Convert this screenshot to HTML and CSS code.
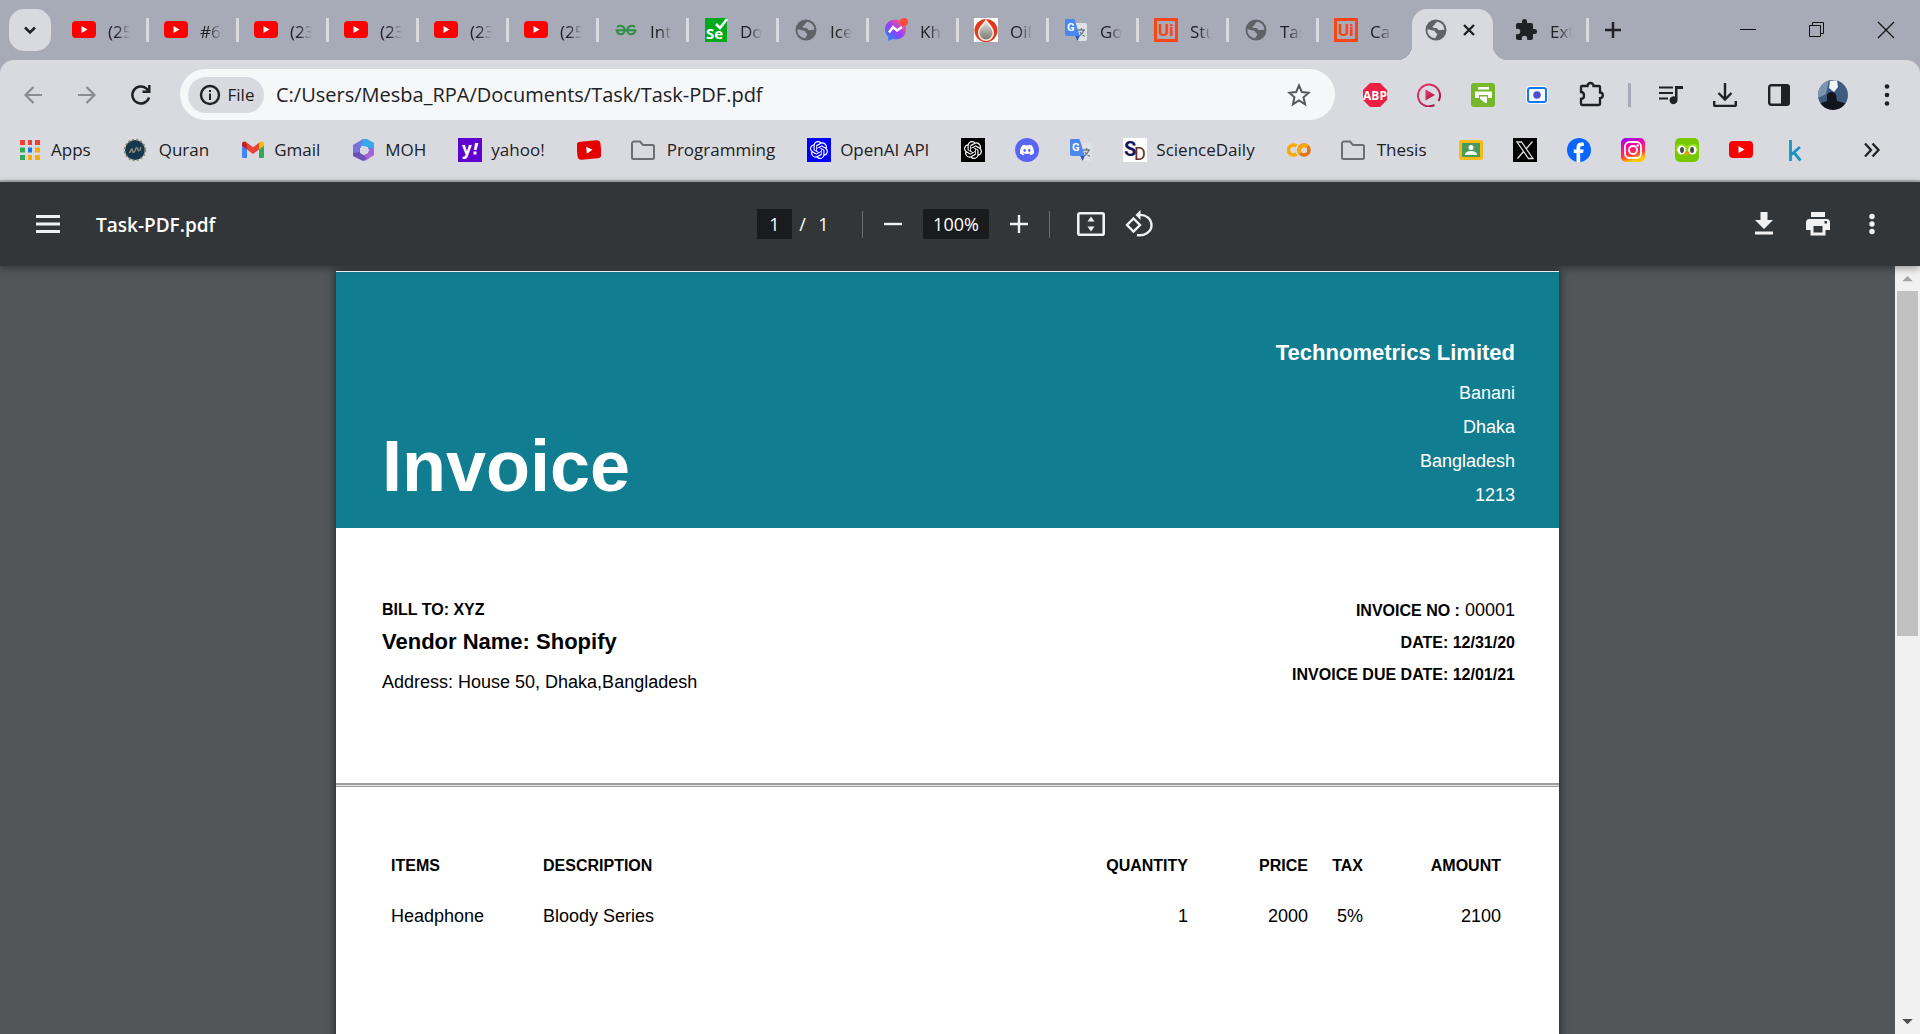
FILE: index.html
```
<!DOCTYPE html>
<html lang="en">
<head>
<meta charset="utf-8">
<title>Task-PDF.pdf</title>
<link rel="stylesheet" href="styles.css">
</head>
<body>
<svg class="sprite" aria-hidden="true">
  <defs>
    <linearGradient id="g-ms2" x1="0" y1="1" x2=".8" y2="0"><stop offset="0" stop-color="#0695ff"/><stop offset=".55" stop-color="#9a3cff"/><stop offset="1" stop-color="#ff6070"/></linearGradient>
    <linearGradient id="g-ig" x1="0" y1="0" x2=".3" y2="1"><stop offset="0" stop-color="#8a00ff"/><stop offset=".45" stop-color="#ff0a90"/><stop offset=".75" stop-color="#ff3a3a"/><stop offset="1" stop-color="#ffc800"/></linearGradient>
    <linearGradient id="g-drop" x1="0" y1="0" x2="0" y2="1"><stop offset="0" stop-color="#e8e8e4"/><stop offset="1" stop-color="#777770"/></linearGradient>
    <linearGradient id="g-play" x1="0" y1="0" x2="1" y2="1"><stop offset="0" stop-color="#f0356a"/><stop offset="1" stop-color="#9c1840"/></linearGradient>
  </defs>
</svg>
<svg class="symbols" aria-hidden="true">
  <symbol id="youtube" viewBox="0 0 24 24"><rect y="3" width="24" height="17" rx="4" fill="#f00"/><path d="M9.500 8v7l6-3.500z" fill="#fff"/></symbol>
  <symbol id="globe" viewBox="0 0 24 24"><circle cx="12" cy="12" r="10.500" fill="#5f6368"/><path d="M3.500 11.200 8 12.300c1.500.4 3 .2 3.300 1.700.2 1.200 1.800.9 1.800 2.400 0 1.600-1.600 1.600-1.800 3.900C7.200 20 3.500 16.600 3.500 12.800zM13.500 3.800c-1 .8-2.600 1.400-2.800 2.800-.2 1.200-2.200 1-2 2.400.2 1.100 1.800.9 3.300.9 1.800 0 1.400 1.900 3 2.200 1.700.3 3.500-.9 5.200.3.500-4-2.600-7.800-6.700-8.600z" fill="currentColor"/></symbol>
  <symbol id="translate" viewBox="0 0 24 24"><path d="M10 5h11a2 2 0 0 1 2 2v14a2 2 0 0 1-2 2h-7z" fill="#dfe1e5"/><path d="M14 12h7M17.500 10v2M20 12c-1 3-3 5-5 6M16 14c1 2 2.500 3.500 5 4.500" stroke="#6a7f8a" stroke-width="1.300" fill="none"/><path d="M11 17.500h5L13.500 23z" fill="#2f56b8"/><path d="M2 1h8.500l5.300 17H3a2 2 0 0 1-2-2V2a1 1 0 0 1 1-1z" fill="#4a88f0"/><text x="3" y="13" font-size="11" font-weight="700" fill="#fff" font-family="Roboto, sans-serif">G</text></symbol>
  <symbol id="uipath" viewBox="0 0 24 24"><rect x="1.500" y="1.500" width="21" height="21" fill="none" stroke="#fa4616" stroke-width="3"/><text x="4" y="18" font-size="17" font-weight="700" fill="#fa4616" font-family="Roboto, sans-serif">Ui</text></symbol>
  <symbol id="folder" viewBox="0 0 24 24"><path d="M3 3.500h6l3 3.500h9.500a1.500 1.500 0 0 1 1.500 1.500v11a1.500 1.500 0 0 1-1.500 1.500H2.500A1.500 1.500 0 0 1 1 19.500v-14a2 2 0 0 1 2-2z" fill="none" stroke="#6b6e73" stroke-width="2"/></symbol>
  <symbol id="knot" viewBox="0 0 24 24"><path fill="#fff" d="M22.2819 9.8211a5.9847 5.9847 0 0 0-.5157-4.9108 6.0462 6.0462 0 0 0-6.5098-2.9A6.0651 6.0651 0 0 0 4.9807 4.1818a5.9847 5.9847 0 0 0-3.9977 2.9 6.0462 6.0462 0 0 0 .7427 7.0966 5.98 5.98 0 0 0 .511 4.9107 6.051 6.051 0 0 0 6.5146 2.9001A5.9847 5.9847 0 0 0 13.2599 24a6.0557 6.0557 0 0 0 5.7718-4.2058 5.9894 5.9894 0 0 0 3.9977-2.9001 6.0557 6.0557 0 0 0-.7475-7.0729zm-9.022 12.6081a4.4755 4.4755 0 0 1-2.8764-1.0408l.1419-.0804 4.7783-2.7582a.7948.7948 0 0 0 .3927-.6813v-6.7369l2.02 1.1686a.071.071 0 0 1 .038.052v5.5826a4.504 4.504 0 0 1-4.4945 4.4944zm-9.6607-4.1254a4.4708 4.4708 0 0 1-.5346-3.0137l.142.0852 4.783 2.7582a.7712.7712 0 0 0 .7806 0l5.8428-3.3685v2.3324a.0804.0804 0 0 1-.0332.0615L9.74 19.9502a4.4992 4.4992 0 0 1-6.1408-1.6464zM2.3408 7.8956a4.485 4.485 0 0 1 2.3655-1.9728V11.6a.7664.7664 0 0 0 .3879.6765l5.8144 3.3543-2.0201 1.1685a.0757.0757 0 0 1-.071 0l-4.8303-2.7865A4.504 4.504 0 0 1 2.3408 7.872zm16.5963 3.8558L13.1038 8.364 15.1192 7.2a.0757.0757 0 0 1 .071 0l4.8303 2.7913a4.4944 4.4944 0 0 1-.6765 8.1042v-5.6772a.79.79 0 0 0-.407-.667zm2.0107-3.0231l-.142-.0852-4.7735-2.7818a.7759.7759 0 0 0-.7854 0L9.409 9.2297V6.8974a.0662.0662 0 0 1 .0284-.0615l4.8303-2.7866a4.4992 4.4992 0 0 1 6.6802 4.66zM8.3065 12.863l-2.02-1.1638a.0804.0804 0 0 1-.038-.0567V6.0742a4.4992 4.4992 0 0 1 7.3757-3.4537l-.142.0805L8.704 5.459a.7948.7948 0 0 0-.3927.6813zm1.0976-2.3654l2.602-1.4998 2.6069 1.4998v2.9994l-2.5974 1.4997-2.6067-1.4997Z"/></symbol>
</svg>

<header class="browser">
  <div class="tabstrip">
    <button class="tab-search" aria-label="Search tabs"><svg class="icon" viewBox="0 0 24 24"><path d="m7 9.500 5 5 5-5" fill="none" stroke="#202124" stroke-width="2.500"/></svg></button>
    <div class="tabs" role="tablist">
      <button class="tab tab-first" role="tab"><svg class="icon"><use href="#youtube"/></svg><span class="tab-title">(25)</span></button>
      <button class="tab" role="tab"><svg class="icon"><use href="#youtube"/></svg><span class="tab-title">#6</span></button>
      <button class="tab" role="tab"><svg class="icon"><use href="#youtube"/></svg><span class="tab-title">(23)</span></button>
      <button class="tab" role="tab"><svg class="icon"><use href="#youtube"/></svg><span class="tab-title">(23)</span></button>
      <button class="tab" role="tab"><svg class="icon"><use href="#youtube"/></svg><span class="tab-title">(23)</span></button>
      <button class="tab" role="tab"><svg class="icon"><use href="#youtube"/></svg><span class="tab-title">(25)</span></button>
      <button class="tab" role="tab"><svg class="icon" viewBox="0 0 24 24"><g fill="none" stroke="#2f8d46" stroke-width="2"><path d="M3 9c4-2.500 7.500-.5 7.500 3a3.800 3.800 0 0 1-7.600 1"/><path d="M21 9c-4-2.500-7.500-.5-7.500 3a3.800 3.800 0 0 0 7.600 1"/><path d="M1.500 12.300h21"/></g></svg><span class="tab-title">Int</span></button>
      <button class="tab" role="tab"><svg class="icon" viewBox="0 0 24 24"><path d="M1 0h22v24H1z" fill="#00a81c"/><path d="m12 6 4 4 7-9" fill="none" stroke="#fff" stroke-width="2.500"/><text x="2" y="21" font-size="15" font-weight="700" fill="#fff" font-family="Open Sans, sans-serif">Se</text></svg><span class="tab-title">Do</span></button>
      <button class="tab" role="tab"><svg class="icon"><use href="#globe"/></svg><span class="tab-title">Ice</span></button>
      <button class="tab" role="tab"><svg class="icon" viewBox="0 0 24 24"><path d="M11.500 1.500C5.500 1.500 1 5.800 1 11.500c0 3 1.300 5.500 3.300 7.200V23l4-2c1 .3 2 .4 3.200.4 6 0 10.500-4.300 10.500-10S17.500 1.500 11.500 1.500z" fill="url(#g-ms2)"/><path d="m5 14.500 4-5.500 4 3.500L18 9" fill="none" stroke="#fff" stroke-width="2.500"/><circle cx="20" cy="4" r="4" fill="#ff4b3a"/></svg><span class="tab-title">Kh</span></button>
      <button class="tab" role="tab"><svg class="icon" viewBox="0 0 24 24"><path d="M0 0h24v24H0z" fill="#fff"/><circle cx="12" cy="12.500" r="11.500" fill="#df3a1c"/><path d="M12 0c1 5 8 8 8 15a8 8 0 0 1-16 0C4 8 11 5 12 0z" fill="#f6ece6"/><path d="M12 3c1 4 6.500 7 6.500 12a6.500 6.500 0 0 1-13 0C5.500 10 11 7 12 3z" fill="url(#g-drop)"/></svg><span class="tab-title">Oil</span></button>
      <button class="tab" role="tab"><svg class="icon"><use href="#translate"/></svg><span class="tab-title">Go</span></button>
      <button class="tab" role="tab"><svg class="icon"><use href="#uipath"/></svg><span class="tab-title">Stu</span></button>
      <button class="tab" role="tab"><svg class="icon"><use href="#globe"/></svg><span class="tab-title">Tas</span></button>
      <button class="tab tab-before" role="tab"><svg class="icon"><use href="#uipath"/></svg><span class="tab-title">Ca</span></button>
      <div class="tab tab-active" role="tab" aria-selected="true"><svg class="icon"><use href="#globe"/></svg><button class="tab-close" aria-label="Close tab"><svg class="icon-small" viewBox="0 0 18 18"><path d="m4 4 10 10m0-10L4 14" stroke="#202124" stroke-width="2.400"/></svg></button></div>
      <button class="tab" role="tab"><svg class="icon" viewBox="0 0 24 24"><path fill="#202124" d="M20.500 11H19V7c0-1.100-.9-2-2-2h-4V3.500a2.500 2.500 0 0 0-5 0V5H4c-1.100 0-2 .9-2 2v3.800h1.500a2.700 2.700 0 0 1 0 5.400H2V20c0 1.100.9 2 2 2h3.800v-1.500a2.700 2.700 0 0 1 5.400 0V22H17c1.100 0 2-.9 2-2v-4h1.500a2.500 2.500 0 0 0 0-5z"/></svg><span class="tab-title">Ext</span></button>
    </div>
    <button class="new-tab" aria-label="New tab"><svg class="icon" viewBox="0 0 24 24"><path d="M12 4v16M4 12h16" stroke="#202124" stroke-width="2.500"/></svg></button>
    <div class="window-buttons">
      <button aria-label="Minimize"><svg class="icon" viewBox="0 0 24 24"><path d="M4 11.500h16" stroke="#111" /></svg></button>
      <button aria-label="Restore"><svg class="icon" viewBox="0 0 24 24"><path d="M4.500 7.500h11v11h-11zM7.500 7V4.500h11v11H16" fill="none" stroke="#111"/></svg></button>
      <button aria-label="Close"><svg class="icon" viewBox="0 0 24 24"><path d="m4 4 16 16m0-16L4 20" stroke="#111" stroke-width="1.200"/></svg></button>
    </div>
  </div>

  <div class="toolbar">
    <nav class="history">
      <button aria-label="Back"><svg class="icon" viewBox="0 0 24 24"><path d="M21 12H5m7.500-8L4.500 12l8 8" fill="none" stroke="#8a8b90" stroke-width="2.200"/></svg></button>
      <button aria-label="Forward"><svg class="icon" viewBox="0 0 24 24"><path d="M3 12h16m-7.500-8 8 8-8 8" fill="none" stroke="#8a8b90" stroke-width="2.200"/></svg></button>
      <button aria-label="Reload"><svg class="icon" viewBox="0 0 24 24"><path d="M20 14.500A8.500 8.500 0 1 1 17.500 5.600L20 8.500" fill="none" stroke="#202124" stroke-width="2.500"/><path d="M21.500 2v8h-8V7.600h5.600V2z" fill="#202124"/></svg></button>
    </nav>
    <div class="omnibox">
      <button class="site-chip"><svg class="icon" viewBox="0 0 24 24"><circle cx="12" cy="12" r="9" fill="none" stroke="#202124" stroke-width="2.400"/><path d="M12 10.500V17M12 7v2" stroke="#202124" stroke-width="2"/></svg>File</button>
      <input class="url" type="text" aria-label="Address" value="C:/Users/Mesba_RPA/Documents/Task/Task-PDF.pdf">
      <button class="star" aria-label="Bookmark"><svg class="icon" viewBox="0 0 24 24"><path d="m12 2.500 2.800 6.500 7 .7-5.300 4.600 1.600 7L12 17.500l-6.100 3.800 1.600-7L2.200 9.700l7-.7z" fill="none" stroke="#55585d" stroke-width="2"/></svg></button>
    </div>
    <div class="extensions">
      <button aria-label="Adblock Plus"><svg class="icon" viewBox="0 0 24 24"><path d="M7 0h10l7 7v10l-7 7H7l-7-7V7z" fill="#ee1f44"/><text x="12" y="16.500" font-size="12" font-weight="700" fill="#fff" text-anchor="middle" font-family="Open Sans, sans-serif">ABP</text></svg></button>
      <button aria-label="Player"><svg class="icon" viewBox="0 0 24 24"><path d="M17.500 22a11 11 0 1 1 4-4M17.500 22c-2 1-4 1.200-5.500 1" fill="none" stroke="url(#g-play)" stroke-width="2"/><path d="M8.500 6.500v11L18 12z" fill="url(#g-play)"/></svg></button>
      <button aria-label="Print friendly"><svg class="icon" viewBox="0 0 24 24"><rect width="24" height="24" rx="3" fill="#76b82a"/><path d="M7 4h11v2.500H7zM4 8.500h17V15h-4v-3H8v3H4z" fill="#fff"/><path d="M8.500 13h8v8l-3-1-5-4z" fill="#fff" stroke="#76b82a"/></svg></button>
      <button aria-label="Screen capture"><svg class="icon" viewBox="0 0 24 24"><rect x="1" y="3" width="22" height="18" rx="4" fill="#fff"/><rect x="3" y="5" width="18" height="14" rx="2" fill="#fff" stroke="#1277ff" stroke-width="2"/><circle cx="12" cy="12" r="3.800" fill="#4a4ed8"/></svg></button>
      <button aria-label="Extensions"><svg class="icon-large" viewBox="0 0 28 28"><path d="M5 5h5.500a3 3 0 0 1 6 0H22a1 1 0 0 1 1 1v5.500a2.800 2.800 0 0 1 0 5.600V23a1 1 0 0 1-1 1H5a1 1 0 0 1-1-1v-5c4 0 4-7 0-7V6a1 1 0 0 1 1-1z" fill="none" stroke="#202124" stroke-width="2.300"/></svg></button>
      <span class="divider"></span>
      <button aria-label="Media"><svg class="icon" viewBox="0 0 24 24"><path d="M0 4.500h14M0 10h14M0 15.500h9" stroke="#202124" stroke-width="2.200"/><path d="M16 3h8v3h-5.500v11a4 4 0 1 1-2.500-3.500z" fill="#202124"/></svg></button>
      <button aria-label="Downloads"><svg class="icon" viewBox="0 0 24 24"><path d="M12 0v16M5.500 10l6.500 6.500 6.500-6.500M1.200 18v4a1 1 0 0 0 1 1h19.600a1 1 0 0 0 1-1v-4" fill="none" stroke="#202124" stroke-width="2.400"/></svg></button>
      <button aria-label="Side panel"><svg class="icon" viewBox="0 0 24 24"><rect x="2.200" y="2.200" width="19.600" height="19.600" rx="2" fill="none" stroke="#202124" stroke-width="2.400"/><path d="M14 2h8v20h-8z" fill="#202124"/></svg></button>
      <button class="avatar" aria-label="Profile"><svg viewBox="0 0 30 30"><clipPath id="round"><circle cx="15" cy="15" r="15"/></clipPath><g clip-path="url(#round)"><path d="M0 0h30v30H0z" fill="#3f5c80"/><path d="M0 0h11l-3 14-8 4z" fill="#7d94b0"/><path d="M12 1l7-1 1 7-4 5-5-4z" fill="#f2f5f8"/><path d="M0 24l9-3V15c1-4 8-4 9 0l1 6 11 3v6H0z" fill="#10161c"/></g></svg></button>
      <button aria-label="Menu"><svg class="icon" viewBox="0 0 24 24" fill="#202124"><circle cx="12" cy="3.500" r="2.300"/><circle cx="12" cy="12" r="2.300"/><circle cx="12" cy="20.500" r="2.300"/></svg></button>
    </div>
  </div>

  <nav class="bookmarks">
    <a class="bookmark" href="#"><svg class="icon" viewBox="0 0 24 24"><g fill="#ea4335"><path d="M2 2h5v5H2zM10 2h4v5h-4zM17 2h5v5h-5z"/></g><path d="M2 9.500h5v5H2zM2 17h5v5H2z" fill="#34a853"/><path d="M10 9.500h4v5h-4z" fill="#1a73e8"/><path d="M17 9.500h5v5h-5zM10 17h4v5h-4zM17 17h5v5h-5z" fill="#fbab05"/></svg><span>Apps</span></a>
    <a class="bookmark bookmark-wide" href="#"><svg class="icon" viewBox="0 0 24 24"><circle cx="12" cy="12" r="10" fill="#16384f" stroke="#8d8468" stroke-width="2.500" stroke-dasharray="2 2"/><circle cx="12" cy="12" r="9.500" fill="#16384f"/><path d="M6 14c2 1 2-4 3-3s0 4 2 3 1-5 3-4 0 4 3 2l1-3" fill="none" stroke="#8c8a72" stroke-width="1.500"/></svg><span>Quran</span></a>
    <a class="bookmark" href="#"><svg class="icon" viewBox="0 0 24 24"><path d="M1 6v13a1 1 0 0 0 1 1h4v-9.500z" fill="#4285f4"/><path d="M23 6v13a1 1 0 0 1-1 1h-4v-9.500z" fill="#34a853"/><path d="M18 6v5.500l5-3.700V6c0-2.500-2.500-3-4-2z" fill="#fbbc04"/><path d="M1 6v1.800l5 3.700V6L5 4C3.500 3 1 3.500 1 6z" fill="#c5221f"/><path d="M5 4l7 5.300L19 4l-1 2v5.500L12 16l-6-4.500V6z" fill="#ea4335"/></svg><span>Gmail</span></a>
    <a class="bookmark" href="#"><svg class="icon" viewBox="0 0 24 24"><path d="M11 1l4 2-6 5v7l-4 4-4-4V7z" fill="#7c6fe0"/><path d="M11 1h4l7 4v9l-6-3V9l-7-1 1-4z" fill="#37a8ec"/><path d="M22 11v6l-9 6-8-4v-1l8-2 4-3v-4z" fill="#a565d8"/><path d="M1 15l7-1 4 4 3 2-4 3-10-5z" fill="#6b50b8"/><path d="m12 8 4 2v5l-4 2-4-2v-5z" fill="#d9dae0"/></svg><span>MOH</span></a>
    <a class="bookmark" href="#"><svg class="icon" viewBox="0 0 24 24"><path d="M0 0h24v24H0z" fill="#5f01d1"/><text x="4" y="17" font-size="17" font-weight="700" fill="#fff" font-family="Open Sans, sans-serif">y</text><path d="M17 5h3.500l-2 7h-2.500zM15.500 13.500h3v3h-3z" fill="#fff"/></svg><span>yahoo!</span></a>
    <a class="bookmark" href="#" aria-label="YouTube"><svg class="icon" viewBox="0 0 24 24"><g transform="rotate(-5 12 12)"><rect y="3" width="24" height="18" rx="4" fill="#e60000"/><path d="M9.500 8.500v7l6-3.500z" fill="#fff"/></g></svg></a>
    <a class="bookmark bookmark-wide" href="#"><svg class="icon"><use href="#folder"/></svg><span>Programming</span></a>
    <a class="bookmark" href="#"><svg class="icon" viewBox="0 0 24 24"><path d="M0 0h24v24H0z" fill="#00f"/><use href="#knot" x="3" y="3" width="18" height="18"/></svg><span>OpenAI API</span></a>
    <a class="bookmark" href="#" aria-label="ChatGPT"><svg class="icon" viewBox="0 0 24 24"><path d="M0 0h24v24H0z"/><use href="#knot" x="3" y="3" width="18" height="18"/></svg></a>
    <a class="bookmark" href="#" aria-label="Discord"><svg class="icon" viewBox="0 0 24 24"><circle cx="12" cy="12" r="12" fill="#5865f2"/><svg x="5" y="5" width="14" height="14" viewBox="0 0 24 24"><path fill="#fff" d="M20.317 4.3698a19.7913 19.7913 0 00-4.8851-1.5152.0741.0741 0 00-.0785.0371c-.211.3753-.4447.8648-.6083 1.2495-1.8447-.2762-3.68-.2762-5.4868 0-.1636-.3933-.4058-.8742-.6177-1.2495a.077.077 0 00-.0785-.037 19.7363 19.7363 0 00-4.8852 1.515.0699.0699 0 00-.0321.0277C.5334 9.0458-.319 13.5799.0992 18.0578a.0824.0824 0 00.0312.0561c2.0528 1.5076 4.0413 2.4228 5.9929 3.0294a.0777.0777 0 00.0842-.0276c.4616-.6304.8731-1.2952 1.226-1.9942a.076.076 0 00-.0416-.1057c-.6528-.2476-1.2743-.5495-1.8722-.8923a.077.077 0 01-.0076-.1277c.1258-.0943.2517-.1923.3718-.2914a.0743.0743 0 01.0776-.0105c3.9278 1.7933 8.18 1.7933 12.0614 0a.0739.0739 0 01.0785.0095c.1202.099.246.1981.3728.2924a.077.077 0 01-.0066.1276 12.2986 12.2986 0 01-1.873.8914.0766.0766 0 00-.0407.1067c.3604.698.7719 1.3628 1.225 1.9932a.076.076 0 00.0842.0286c1.961-.6067 3.9495-1.5219 6.0023-3.0294a.077.077 0 00.0313-.0552c.5004-5.177-.8382-9.6739-3.5485-13.6604a.061.061 0 00-.0312-.0286zM8.02 15.3312c-1.1825 0-2.1569-1.0857-2.1569-2.419 0-1.3332.9555-2.4189 2.157-2.4189 1.2108 0 2.1757 1.0952 2.1568 2.419 0 1.3332-.9555 2.4189-2.1569 2.4189zm7.9748 0c-1.1825 0-2.1569-1.0857-2.1569-2.419 0-1.3332.9554-2.4189 2.1569-2.4189 1.2108 0 2.1757 1.0952 2.1568 2.419 0 1.3332-.946 2.4189-2.1568 2.4189Z"/></svg></svg></a>
    <a class="bookmark" href="#" aria-label="Translate"><svg class="icon"><use href="#translate"/></svg></a>
    <a class="bookmark" href="#"><svg class="icon" viewBox="0 0 24 24"><path d="M0 0h24v24H0z" fill="#fff"/><text x="1" y="18" font-size="20" font-weight="700" fill="#14145a" font-family="Roboto, sans-serif">S</text><text x="11" y="22" font-size="18" fill="#6a2a20" font-family="Roboto, sans-serif">D</text></svg><span>ScienceDaily</span></a>
    <a class="bookmark" href="#" aria-label="Colab"><svg class="icon" viewBox="0 0 24 24" fill="none" stroke-width="3.600"><path d="M9.500 8A5 5 0 1 0 9.500 16" stroke="#f9ab00"/><circle cx="17" cy="12" r="5" stroke="#e8710a"/><path d="M13.500 15.500A5 5 0 0 1 20.500 8.500" stroke="#f9ab00"/></svg></a>
    <a class="bookmark bookmark-wide" href="#"><svg class="icon"><use href="#folder"/></svg><span>Thesis</span></a>
    <a class="bookmark" href="#" aria-label="Classroom"><svg class="icon" viewBox="0 0 24 24"><rect y="2" width="24" height="20" rx="2" fill="#f6bb15"/><path d="M3 5h18v14H3z" fill="#4b9b58"/><circle cx="12" cy="9.500" r="2.500" fill="#fff"/><path d="M6 17c0-3 3-4 6-4s6 1 6 4z" fill="#fff"/></svg></a>
    <a class="bookmark" href="#" aria-label="X"><svg class="icon" viewBox="0 0 24 24"><path d="M0 0h24v24H0z"/><path d="M4 4h4.500L20 20.500h-4.500zM19.500 3.500 13 11M4.500 20.500l6.500-7.500" fill="none" stroke="#ddd" stroke-width="1.300"/></svg></a>
    <a class="bookmark" href="#" aria-label="Facebook"><svg class="icon" viewBox="0 0 24 24"><circle cx="12" cy="12" r="12" fill="#0866ff"/><path d="M9.500 24v-9H6.700v-3.500h2.800V9.500C9.500 6 11.200 4.500 14 4.500c1 0 2 .1 2.800.3V8h-1.600c-1.500 0-2 .7-2 1.900v1.600h3.500L16 15h-2.800v9z" fill="#fff"/></svg></a>
    <a class="bookmark" href="#" aria-label="Instagram"><svg class="icon" viewBox="0 0 24 24"><rect width="24" height="24" rx="5" fill="url(#g-ig)"/><g fill="none" stroke="#fff" stroke-width="1.800"><rect x="4" y="4" width="16" height="16" rx="4.500"/><circle cx="12" cy="12" r="4"/></g><circle cx="16.600" cy="7.400" r="1.200" fill="#fff"/></svg></a>
    <a class="bookmark" href="#" aria-label="Duolingo"><svg class="icon" viewBox="0 0 24 24"><rect width="24" height="24" rx="5" fill="#78c800"/><path d="M1 8c3-3 8-2 11 0 3-2 8-3 11 0v5H1z" fill="#8ee000"/><ellipse cx="6.500" cy="12" rx="4.200" ry="4.500" fill="#fff"/><ellipse cx="17.500" cy="12" rx="4.200" ry="4.500" fill="#fff"/><ellipse cx="7" cy="12" rx="2" ry="3" fill="#4b4b4b"/><ellipse cx="17" cy="12" rx="2" ry="3" fill="#4b4b4b"/><path d="M9.500 15c1-2 4-2 5 0L12 18z" fill="#ff9600"/></svg></a>
    <a class="bookmark" href="#" aria-label="YouTube"><svg class="icon"><use href="#youtube"/></svg></a>
    <a class="bookmark" href="#" aria-label="Kaggle"><svg class="icon" viewBox="0 0 24 24"><path d="M7.500 2v21M17 9l-8.500 7.500M11 14.500l6.500 8" fill="none" stroke="#1795c4" stroke-width="2.800"/></svg></a>
    <button class="overflow" aria-label="More bookmarks"><svg class="icon" viewBox="0 0 24 24"><path d="m5 5.500 6 6.500-6 6.500m7.500-13 6 6.500-6 6.500" fill="none" stroke="#202124" stroke-width="2.300"/></svg></button>
  </nav>
</header>

<div class="pdf-bar">
  <div class="pdf-left">
    <button aria-label="Menu"><svg class="icon" viewBox="0 0 24 24"><path d="M0 4.500h24M0 12h24M0 19.500h24" stroke="#f1f1f1" stroke-width="3"/></svg></button>
    <span class="pdf-name">Task-PDF.pdf</span>
  </div>
  <div class="pdf-center">
    <div class="pager"><input class="page-number" type="text" aria-label="Page number" value="1"><span>/</span><span>1</span></div>
    <span class="bar-divider"></span>
    <button aria-label="Zoom out"><svg class="icon" viewBox="0 0 24 24"><path d="M3 12h18" stroke="#f1f1f1" stroke-width="2.400"/></svg></button>
    <input class="zoom-level" type="text" aria-label="Zoom level" value="100%">
    <button aria-label="Zoom in"><svg class="icon" viewBox="0 0 24 24"><path d="M3 12h18M12 3v18" stroke="#f1f1f1" stroke-width="2.400"/></svg></button>
    <span class="bar-divider"></span>
    <div class="view-buttons">
      <button aria-label="Fit to page"><svg class="icon-large" viewBox="0 0 28 28"><rect x="1.300" y="3.300" width="25.400" height="21.400" rx="1.500" fill="none" stroke="#f1f1f1" stroke-width="2.600"/><path d="m14 6.500 3.500 5h-7zM14 21.500l3.500-5h-7z" fill="#f1f1f1"/></svg></button>
      <button aria-label="Rotate"><svg class="icon-large" viewBox="0 0 28 28"><path d="M8.500 8.500 15 15l-6.500 6.500L2 15zM13 5c8-1 13.500 4 13.500 10.500S19 26.500 12 25" fill="none" stroke="#f1f1f1" stroke-width="2.400"/><path d="M15.500 0v10l-5-5z" fill="#f1f1f1"/></svg></button>
    </div>
  </div>
  <div class="pdf-right">
    <button aria-label="Download"><svg class="icon" viewBox="0 0 24 24"><path d="M8.500 0h7v8H21l-9 9-9-9h5.500zM3 19.500h18V22.500H3z" fill="#f1f1f1"/></svg></button>
    <button aria-label="Print"><svg class="icon" viewBox="0 0 24 24"><path d="M5 0h14v5H5zM3.500 7h17A3.500 3.500 0 0 1 24 10.500V18h-4.500v5.500h-15V18H0v-7.500A3.500 3.500 0 0 1 3.500 7zM7.500 14v6.500h9V14zM18.500 9v2.500H21V9z" fill="#f1f1f1" fill-rule="evenodd"/></svg></button>
    <button aria-label="More"><svg class="icon" viewBox="0 0 24 24" fill="#f1f1f1"><circle cx="12" cy="4.500" r="2.700"/><circle cx="12" cy="12" r="2.700"/><circle cx="12" cy="19.500" r="2.700"/></svg></button>
  </div>
</div>

<div class="viewer">
  <main class="canvas">
    <article class="page">
      <header class="invoice-head">
        <h1>Invoice</h1>
        <address>
          <h2>Technometrics Limited</h2>
          <p>Banani</p>
          <p>Dhaka</p>
          <p>Bangladesh</p>
          <p>1213</p>
        </address>
      </header>
      <section class="parties">
        <div class="bill-to">
          <p class="label">BILL TO: XYZ</p>
          <h3>Vendor Name: Shopify</h3>
          <p>Address: House 50, Dhaka,Bangladesh</p>
        </div>
        <div class="meta">
          <p><span class="label">INVOICE NO :</span> 00001</p>
          <p class="label">DATE: 12/31/20</p>
          <p class="label">INVOICE DUE DATE: 12/01/21</p>
        </div>
      </section>
      <hr class="rule">
      <section class="lines">
        <table>
          <thead><tr><th class="col-item">ITEMS</th><th>DESCRIPTION</th><th class="col-qty num">QUANTITY</th><th class="col-price num">PRICE</th><th class="col-tax num">TAX</th><th class="col-amount num">AMOUNT</th></tr></thead>
          <tbody><tr><td>Headphone</td><td>Bloody Series</td><td class="num">1</td><td class="num">2000</td><td class="num">5%</td><td class="num">2100</td></tr></tbody>
        </table>
      </section>
    </article>
  </main>
  <div class="scrollbar">
    <svg class="arrow" viewBox="0 0 24 24"><path d="m12 9 6 6H6z" fill="#a3a3a3"/></svg>
    <div class="track"><div class="thumb"></div></div>
    <svg class="arrow" viewBox="0 0 24 24"><path d="m12 15 6-6H6z" fill="#505050"/></svg>
  </div>
</div>
</body>
</html>
```
FILE: styles.css
```
* { box-sizing: border-box; }

body {
  margin: 0;
  height: 100vh;
  display: flex;
  flex-direction: column;
  overflow: hidden;
  background: #525659;
  color: #202124;
  font-family: "Open Sans", "Noto Sans", sans-serif;
  font-size: 17px;
}

button, input {
  font: inherit;
  color: inherit;
  border: 0;
  padding: 0;
  background: none;
}

button {
  display: flex;
  align-items: center;
  justify-content: center;
}

svg { display: block; flex: none; }
h1, h2, h3, p { margin: 0; }

.sprite { position: absolute; width: 0; height: 0; }
.symbols { display: none; }
.icon { width: 24px; height: 24px; }
.icon-small { width: 18px; height: 18px; }
.icon-large { width: 28px; height: 28px; }

.browser { flex: none; background: #a7abb7; }

/* Tab strip */
.tabstrip {
  display: flex;
  align-items: center;
  height: 60px;
  padding-left: 9px;
}

.tab-search {
  width: 42px;
  height: 42px;
  border-radius: 15px;
  background: #d9dae0;
}

.tabs { display: flex; align-self: stretch; margin-left: 6px; }

.tab {
  display: flex;
  align-items: center;
  justify-content: flex-start;
  gap: 12px;
  width: 90px;
  height: 60px;
  padding-left: 15px;
  background: linear-gradient(#d9dae0, #d9dae0) right 18px / 3px 24px no-repeat;
}

.tab .icon { color: #a7abb7; }
.tab-first { width: 92px; }
.tab-before { background: none; }

.tab-title {
  width: 22px;
  padding-top: 2px;
  overflow: hidden;
  text-align: left;
  white-space: nowrap;
  -webkit-mask-image: linear-gradient(90deg, #000 40%, transparent);
  mask-image: linear-gradient(90deg, #000 40%, transparent);
}

.tab-active {
  position: relative;
  width: 81px;
  height: 51px;
  margin: 9px 6px 0 3px;
  padding: 0 0 9px 12px;
  border-radius: 15px 15px 0 0;
  background: #d9dae0;
}

.tab-active .icon { color: #d9dae0; }

.tab-active::before,
.tab-active::after {
  content: "";
  position: absolute;
  bottom: 0;
  width: 14px;
  height: 14px;
}

.tab-active::before {
  right: 100%;
  background: radial-gradient(circle at 0 0, transparent 14px, #d9dae0 14px);
}

.tab-active::after {
  left: 100%;
  background: radial-gradient(circle at 100% 0, transparent 14px, #d9dae0 14px);
}

.new-tab { width: 48px; height: 48px; }
.window-buttons { display: flex; margin-left: auto; }
.window-buttons button { width: 69px; height: 60px; }

/* Address bar */
.toolbar {
  display: flex;
  align-items: center;
  height: 69px;
  border-radius: 14px 14px 0 0;
  background: #d9dae0;
}

.history { display: flex; width: 180px; gap: 30px; padding-left: 21px; }

.omnibox {
  display: flex;
  align-items: center;
  flex: 1;
  height: 51px;
  padding: 0 24px 0 8px;
  border-radius: 26px;
  background: #f6f7f9;
  font-size: 20px;
}

.site-chip {
  height: 36px;
  width: 76px;
  gap: 6px;
  border-radius: 18px;
  background: #d9dae0;
  font-size: 17px;
}

.url { flex: 1; margin-left: 12px; height: 40px; }

.extensions { display: flex; align-items: center; gap: 30px; padding: 0 21px 0 28px; }
.extensions .icon-large { margin: 0 -2px; }
.divider { width: 3px; height: 24px; margin: 0 -2px 0 -5px; background: #a7abb7; }
.avatar { width: 30px; height: 30px; margin: 0 -3px; }

/* Bookmarks */
.bookmarks {
  display: flex;
  align-items: center;
  gap: 30px;
  height: 53px;
  padding: 0 36px 10px 18px;
  background: #d9dae0;
  border-bottom: 2px solid #adafb4;
}

.bookmark {
  display: flex;
  align-items: center;
  gap: 9px;
  color: inherit;
  text-decoration: none;
  white-space: nowrap;
}

.bookmark span { padding-right: 2px; }
.bookmark-wide { gap: 12px; }
.overflow { margin-left: auto; }

/* PDF toolbar */
.pdf-bar {
  position: relative;
  z-index: 1;
  flex: none;
  display: grid;
  grid-template-columns: 1fr auto 1fr;
  align-items: center;
  height: 84px;
  background: #323639;
  color: #fff;
  font-size: 18px;
  box-shadow: 0 2px 8px rgba(0, 0, 0, .4);
}

.pdf-left { display: flex; align-items: center; gap: 36px; padding-left: 36px; }
.pdf-name { padding-top: 2px; font-size: 19px; font-weight: 600; }
.pdf-center { display: flex; align-items: center; gap: 18px; margin-right: 10px; }
.pager { display: flex; align-items: center; margin-right: 10px; }
.pager span { width: 21px; text-align: center; }
.page-number, .zoom-level { height: 30px; background: #191b1c; text-align: center; }
.page-number { width: 35px; }
.zoom-level { width: 66px; }
.bar-divider { width: 1px; height: 27px; background: #6c6f71; }
.view-buttons { display: flex; gap: 20px; margin-left: 9px; }
.pdf-right { display: flex; justify-content: flex-end; gap: 30px; padding-right: 36px; }

/* Document */
.viewer { flex: 1; min-height: 0; display: flex; }
.canvas { flex: 1; overflow: hidden; padding: 5px 336px 0; }

.page {
  min-height: 1584px;
  border-top: 1px solid #fff;
  background: #fff;
  color: #000;
  box-shadow: 0 0 8px 1px rgba(0, 0, 0, .55);
  font: 18px/34px "Liberation Sans", Arial, sans-serif;
}

.invoice-head {
  display: flex;
  align-items: flex-end;
  justify-content: space-between;
  padding: 66px 44px 16px 46px;
  background: #117d91;
  color: #fff;
}

.invoice-head h1 { font-size: 72px; line-height: 92px; }
.invoice-head address { font-style: normal; text-align: right; }
.invoice-head h2 { margin-bottom: 8px; font-size: 22px; line-height: 30px; }

.parties {
  display: flex;
  justify-content: space-between;
  padding: 66px 44px 85px 46px;
  line-height: 32px;
}

.parties h3 { margin-bottom: 8px; font-size: 22px; line-height: 32px; }
.meta { text-align: right; }
.label { font-size: 16px; font-weight: 700; }

.rule {
  height: 4px;
  margin: 0;
  border: solid #9c9c9c;
  border-width: 2px 0 1px;
  background: #e3e3e3;
}

.lines { padding: 54px 49px 0 46px; }
.lines table { width: 100%; table-layout: fixed; border-collapse: collapse; line-height: 20px; }
.lines th, .lines td { padding: 15px 9px; text-align: left; }
.lines th { font-size: 16px; }
.lines .num { text-align: right; }
.col-item { width: 152px; }
.col-qty { width: 120px; }
.col-price { width: 120px; }
.col-tax { width: 55px; }
.col-amount { width: 138px; }

.scrollbar {
  display: flex;
  flex-direction: column;
  width: 25px;
  padding: 0 2px;
  background: #f1f1f1;
}

.arrow { width: 21px; height: 25px; }
.track { flex: 1; }
.thumb { height: 48%; background: #c1c1c1; }
```
